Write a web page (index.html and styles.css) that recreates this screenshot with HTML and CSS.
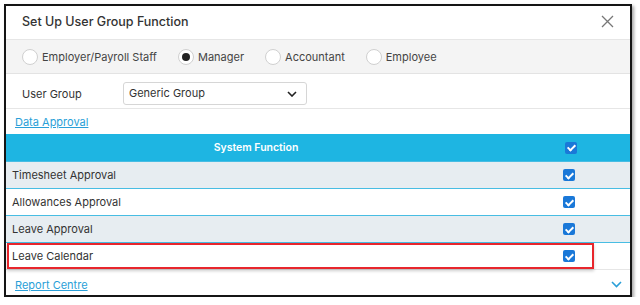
FILE: index.html
```html
<!DOCTYPE html>
<html lang="en">
<head>
  <meta charset="UTF-8" />
  <title>Set Up User Group Function</title>
  <link rel="stylesheet" href="styles.css">
</head>
<body>
  <div class="dialog">
    <div class="dialog-header">
      <h1>Set Up User Group Function</h1>
      <button class="close" aria-label="Close">
        <svg width="13" height="13" viewBox="0 0 13 13"><path d="M1 1L12 12M12 1L1 12" stroke="#777" stroke-width="1.3" fill="none"/></svg>
      </button>
    </div>

    <div class="role-row">
      <label class="radio"><span class="dot"></span>Employer/Payroll Staff</label>
      <label class="radio checked"><span class="dot"></span>Manager</label>
      <label class="radio"><span class="dot"></span>Accountant</label>
      <label class="radio"><span class="dot"></span>Employee</label>
    </div>

    <div class="group-row">
      <span class="group-label">User Group</span>
      <div class="select">
        <span>Generic Group</span>
        <svg width="10" height="6" viewBox="0 0 10 6"><path d="M1 1L5 5L9 1" stroke="#222" stroke-width="1.6" fill="none"/></svg>
      </div>
    </div>

    <div class="link-row"><a href="#">Data Approval</a></div>

    <div class="func-table">
      <div class="func-head">
        <span>System Function</span>
        <span class="cell-check"><span class="check"></span></span>
      </div>
      <div class="func-row shaded">
        <span>Timesheet Approval</span>
        <span class="cell-check"><span class="check"></span></span>
      </div>
      <div class="func-row">
        <span>Allowances Approval</span>
        <span class="cell-check"><span class="check"></span></span>
      </div>
      <div class="func-row shaded">
        <span>Leave Approval</span>
        <span class="cell-check"><span class="check"></span></span>
      </div>
      <div class="func-row last highlight">
        <span>Leave Calendar</span>
        <span class="cell-check"><span class="check"></span></span>
      </div>
    </div>

    <div class="link-row bottom">
      <a href="#">Report Centre</a>
      <svg width="11" height="7" viewBox="0 0 11 7"><path d="M1 1L5.5 5.5L10 1" stroke="#2a9fd8" stroke-width="1.6" fill="none"/></svg>
    </div>
  </div>
</body>
</html>
```

FILE: styles.css
```css
* {
  margin: 0;
  padding: 0;
  box-sizing: border-box;
  font-family: 'Inter', 'Liberation Sans', sans-serif;
}
body {
  background: #fff;
  padding: 4px 0 0 4px;
}
.dialog {
  width: 628px;
  height: 293px;
  border: 2px solid #151515;
  background: #fff;
  box-shadow: 2px 2px 3px rgba(0,0,0,0.35);
  overflow: hidden;
}
.dialog-header {
  height: 34px;
  display: flex;
  align-items: center;
  justify-content: space-between;
  padding: 0 16px 3px 16px;
  border-bottom: 1px solid #e6e6e6;
}
.dialog-header h1 {
  font-size: 12.5px;
  font-weight: 500;
  color: #333;
}
.close {
  background: none;
  border: none;
  display: flex;
  margin-top: 1px;
}
.role-row {
  height: 34px;
  background: #f4f4f4;
  border-bottom: 1px solid #e3e3e3;
  display: flex;
  align-items: center;
  padding-left: 16px;
  gap: 21px;
}
.radio {
  display: flex;
  align-items: center;
  gap: 4px;
  font-size: 11px;
  color: #444;
}
.dot {
  width: 16px;
  height: 16px;
  border-radius: 50%;
  background: #fff;
  border: 1px solid #d0d0d0;
  display: flex;
  align-items: center;
  justify-content: center;
}
.radio.checked .dot::after {
  content: "";
  width: 8px;
  height: 8px;
  border-radius: 50%;
  background: #222;
}
.group-row {
  height: 35px;
  display: flex;
  align-items: center;
  padding-left: 16px;
  border-bottom: 1px solid #e6e6e6;
}
.group-label {
  width: 101px;
  font-size: 11px;
  color: #333;
  margin-top: 6px;
}
.select {
  width: 184px;
  height: 23px;
  border: 1px solid #d6d6d6;
  border-radius: 3px;
  display: flex;
  align-items: center;
  justify-content: space-between;
  padding: 0 9px 0 5px;
  font-size: 11px;
  color: #333;
  margin-top: 5px;
}
.select span {
  margin-top: -2px;
}
.link-row {
  height: 25px;
  display: flex;
  align-items: center;
  padding-left: 9px;
}
.link-row a {
  font-size: 11px;
  color: #2a9fd8;
  text-decoration: underline;
}
.link-row.bottom {
  justify-content: space-between;
  padding: 3px 8px 0 9px;
  height: 26px;
}
.func-table {
  display: flex;
  flex-direction: column;
}
.func-head,
.func-row {
  display: grid;
  grid-template-columns: 1fr 124px;
  align-items: center;
  height: 27px;
}
.func-head {
  background: #1eb5e2;
  color: #fff;
  font-size: 10.5px;
  font-weight: 600;
  text-align: center;
}
.func-row {
  font-size: 11px;
  color: #333;
  padding-left: 6px;
  border-top: 1px solid #48bde3;
}
.func-row.shaded {
  background: #e7edf1;
}
.func-row.last {
  height: 28px;
  border-bottom: 1px solid #e6e6e6;
}
.func-head .cell-check {
  margin-left: 4px;
}
.cell-check {
  display: flex;
  justify-content: center;
  padding-left: 2px;
}
.check {
  width: 12px;
  height: 12px;
  border-radius: 2px;
  background: #1a78d8;
  position: relative;
}
.check::after {
  content: "";
  position: absolute;
  left: 4px;
  top: 1.5px;
  width: 3px;
  height: 6px;
  border: solid #fff;
  border-width: 0 2px 2px 0;
  transform: rotate(45deg);
}
.highlight {
  position: relative;
}
.highlight::before {
  content: "";
  position: absolute;
  left: 1px;
  right: 36px;
  top: 0;
  bottom: 0;
  border: 2px solid #e8262c;
  box-shadow: 0 2px 3px rgba(0,0,0,0.2);
}
```
